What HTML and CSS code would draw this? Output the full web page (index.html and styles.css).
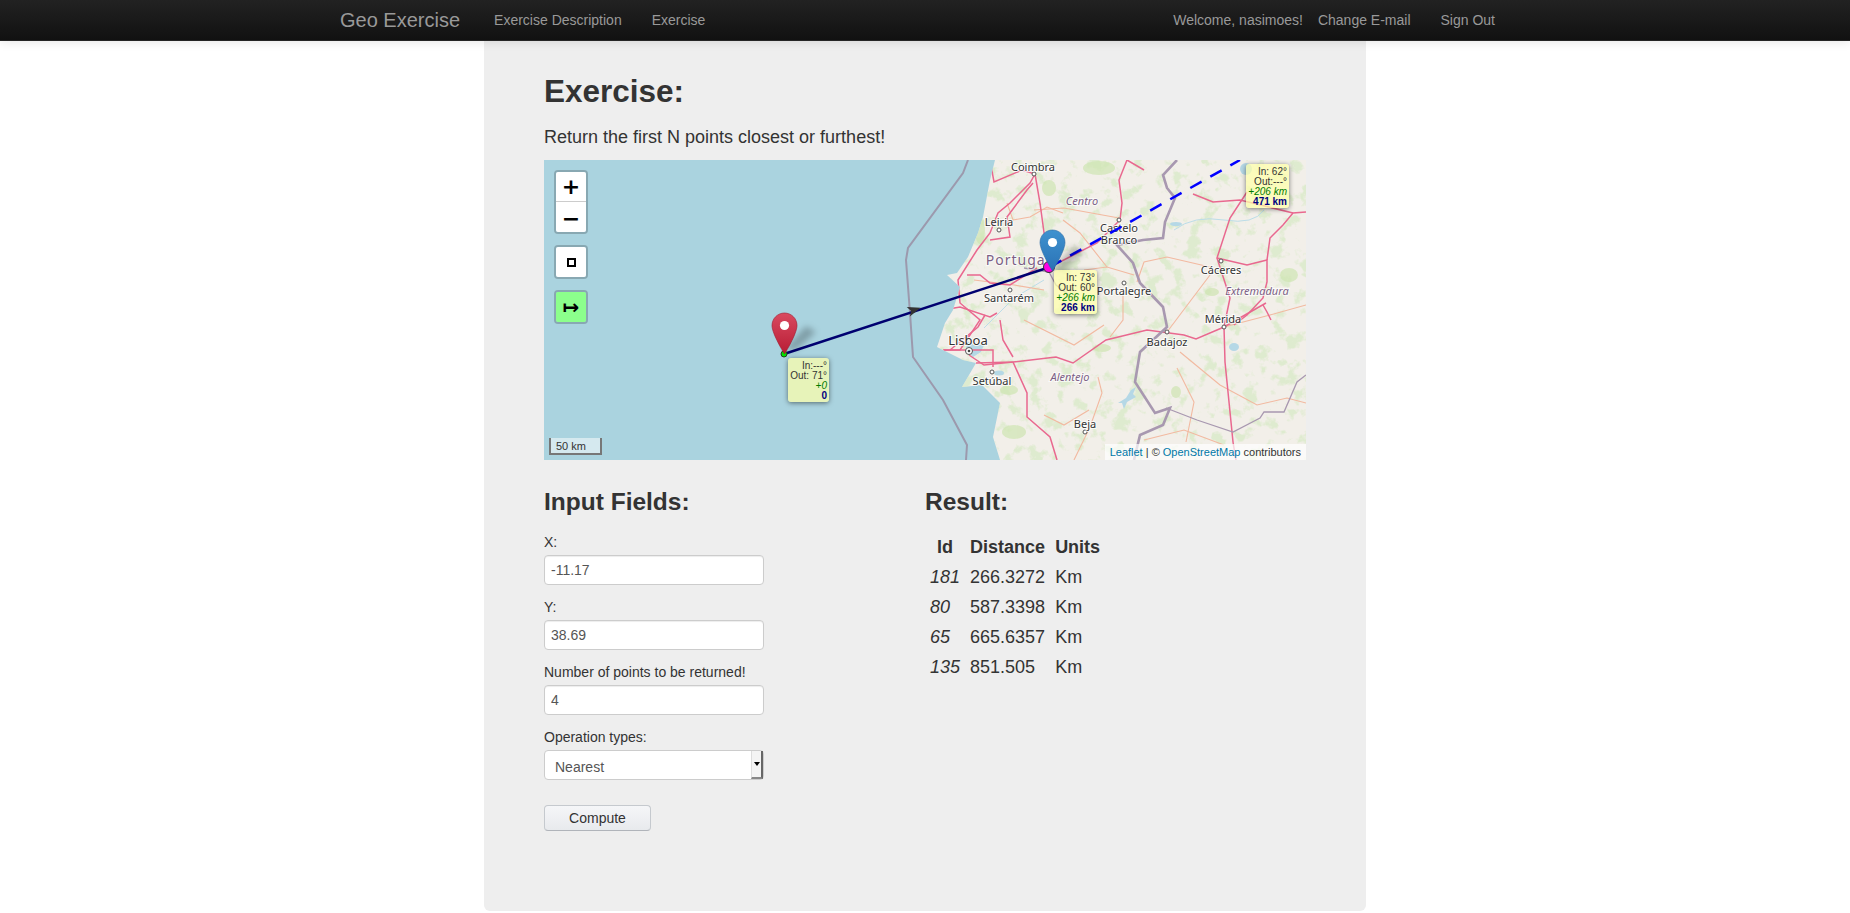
FILE: index.html
```html
<!DOCTYPE html>
<html lang="en">
<head>
<meta charset="utf-8">
<title>Geo Exercise</title>
<link rel="stylesheet" href="styles.css">
</head>
<body>
<header class="navbar">
  <div class="nav-inner">
    <a class="brand" href="#">Geo Exercise</a>
    <nav class="nav-left">
      <a href="#">Exercise Description</a>
      <a href="#">Exercise</a>
    </nav>
    <div class="nav-right">
      <span class="welcome">Welcome, nasimoes!</span>
      <a href="#">Change E-mail</a>
      <a href="#">Sign Out</a>
    </div>
  </div>
</header>
<main class="hero">
  <h1>Exercise:</h1>
  <p class="lead">Return the first N points closest or furthest!</p>
  <div class="map">
    <svg class="map-art" viewBox="0 0 762 300" width="762" height="300" xmlns="http://www.w3.org/2000/svg">
      <defs>
        <clipPath id="landClip">
          <path d="M451 0L446 20L439 57L434 73L424 97L413 113L403 115L416 127L409 150L401 163L393 187L419 200L432 203L418 227L438 225L456 243L449 277L456 300H762V0Z"/>
        </clipPath>
        <filter id="veg" x="0" y="0" width="100%" height="100%" color-interpolation-filters="sRGB">
          <feTurbulence type="fractalNoise" baseFrequency="0.07" numOctaves="4" seed="7"/>
          <feColorMatrix type="matrix" values="0 0 0 0 0.82  0 0 0 0 0.91  0 0 0 0 0.74  7 0 0 0 -3.75"/>
          <feComponentTransfer><feFuncA type="linear" slope="0.6"/></feComponentTransfer>
        </filter>
        <filter id="blur2" x="-50%" y="-50%" width="200%" height="200%"><feGaussianBlur stdDeviation="3"/></filter>
        <linearGradient id="redPin" x1="0" y1="0" x2="0" y2="1">
          <stop offset="0" stop-color="#d94a60"/><stop offset="1" stop-color="#b81c34"/>
        </linearGradient>
        <linearGradient id="bluePin" x1="0" y1="0" x2="0" y2="1">
          <stop offset="0" stop-color="#3f92cf"/><stop offset="1" stop-color="#2a72b5"/>
        </linearGradient>
        <path id="pin" d="M12.5 0C5.6 0 0 5.6 0 12.5 0 21 12.5 41 12.5 41S25 21 25 12.5C25 5.6 19.4 0 12.5 0z"/>
      </defs>

      <rect class="sea" width="762" height="300"/>
      <g clip-path="url(#landClip)">
        <rect class="land" width="762" height="300"/>
        <rect width="762" height="300" filter="url(#veg)"/>
        <g class="green">
          <ellipse cx="555" cy="8" rx="16" ry="7"/><ellipse cx="505" cy="28" rx="7" ry="8"/>
          <ellipse cx="470" cy="272" rx="12" ry="7"/><ellipse cx="465" cy="230" rx="9" ry="5"/>
          <ellipse cx="558" cy="188" rx="9" ry="4"/><ellipse cx="668" cy="132" rx="7" ry="4"/>
          <ellipse cx="632" cy="232" rx="5" ry="6"/><ellipse cx="745" cy="115" rx="9" ry="7"/>
          <ellipse cx="436" cy="70" rx="5" ry="14"/>
        </g>
        <g class="water">
          <path d="M423 181l9 5 9-3-4 9-8 5-7-7z"/>
          <path d="M574 243l8-5 5-8 5-3-3 7 3 3-9 5-3 7-2-6z"/>
          <ellipse cx="690" cy="187" rx="5" ry="4"/><ellipse cx="455" cy="213" rx="5" ry="2.5"/>
          <ellipse cx="702" cy="9" rx="6" ry="6"/><ellipse cx="632" cy="64" rx="6" ry="2"/>
        </g>
        <g class="river">
          <path d="M630 70Q650 55 680 60T720 50"/><path d="M440 168L470 138L500 120"/>
        </g>
        <g class="road-minor">
          <path d="M519 60L536 73L563 107"/><path d="M490 50L520 48L575 58"/>
          <path d="M463 43L469 60L486 57L503 47L519 53"/>
          <path d="M579 133V160L566 177"/><path d="M554 217L558 233L546 267L530 300"/>
          <path d="M593 122L600 102L623 97L666 107"/><path d="M623 172L666 115"/>
          <path d="M636 192L676 225L713 245L743 238L762 243"/><path d="M680 167L726 155L762 145"/>
          <path d="M633 208L650 242L642 282"/><path d="M480 160L530 185L560 165"/>
          <path d="M430 120L470 125L500 130"/><path d="M500 255L520 265L545 250"/>
          <path d="M600 280L640 270L680 285"/><path d="M540 110L563 107L590 115"/>
        </g>
        <g class="road-major">
          <path d="M400 190H416L436 160L416 143L414 120L433 90L446 73L454 53L466 43L486 23L491 14"/>
          <path d="M491 14L496 43L501 80L506 107"/>
          <path d="M489 23L483 30L463 57L466 77L446 80"/>
          <path d="M423 115H436L446 123L466 125L493 108"/>
          <path d="M399 150L416 147L446 157L453 153"/>
          <path d="M456 160L459 180L469 197"/>
          <path d="M399 190H449V207"/>
          <path d="M441 155L434 167L406 190"/>
          <path d="M425 195L440 205L469 202"/>
          <path d="M506 107L553 83L576 60L578 43L575 20L583 0"/>
          <path d="M432 203L469 202L512 197L529 203L562 180L603 170L640 175L652 179L680 167L722 143"/>
          <path d="M469 202L483 233L483 257L506 277L513 300"/>
          <path d="M680 167L681 202L689 282L692 300"/>
          <path d="M680 167L686 138L673 98L686 58L703 32"/>
          <path d="M673 98L703 105L723 100L723 122L719 138L703 155L690 165"/>
          <path d="M723 100L726 78L739 65L749 53L762 52"/>
          <path d="M649 34L669 42L696 40L749 53"/>
          <path d="M719 145L723 152L727 160"/>
          <path d="M446 0L450 22L478 10L491 14"/>
          <path d="M583 0L600 10"/>
        </g>
        <g class="border">
          <path d="M633 0L619 15L623 28L631 38L621 62L619 78L599 80L573 85L589 103L596 123L619 147L623 167L596 192L591 222L611 253L626 248L619 265L596 275L590 300"/>
          <path d="M622 248L653 260L689 272L716 258L720 252L740 252L753 222L762 215" class="border-thin"/>
          <path d="M480 108L505 112L512 125L525 135" class="border-thin"/>
        </g>
      </g>

      <path class="maritime" d="M424 0L419 13L364 88L362 100L366 153L369 197L399 240L423 285L422 300"/>

      <g class="dots">
        <circle cx="490" cy="14" r="2"/><circle cx="455" cy="70" r="2"/><circle cx="575" cy="60" r="2"/>
        <circle cx="580" cy="123" r="2"/><circle cx="466" cy="130" r="2"/><circle cx="448" cy="212" r="2"/>
        <circle cx="541" cy="272" r="2"/><circle cx="677" cy="101" r="2"/><circle cx="680" cy="167" r="2"/>
        <circle cx="623" cy="172" r="2"/><circle cx="425" cy="191" r="3.5"/>
      </g>
      <circle class="bull" cx="425" cy="191" r="1.3"/>

      <g class="place">
        <text x="489" y="11">Coimbra</text>
        <text x="455" y="66">Leiria</text>
        <text x="575" y="72">Castelo</text>
        <text x="575" y="84">Branco</text>
        <text x="580" y="135">Portalegre</text>
        <text x="465" y="142">Santarém</text>
        <text x="448" y="225">Setúbal</text>
        <text x="541" y="268">Beja</text>
        <text x="677" y="114">Cáceres</text>
        <text x="679" y="163">Mérida</text>
        <text x="623" y="186">Badajoz</text>
        <text class="big" x="424" y="185">Lisboa</text>
      </g>
      <g class="region">
        <text x="538" y="45">Centro</text>
        <text x="526" y="221">Alentejo</text>
        <text x="713" y="135">Extremadura</text>
        <text class="country" x="474" y="105">Portugal</text>
      </g>

      <line class="dash" x1="506" y1="107" x2="696" y2="0"/>
      <line class="solid" x1="240" y1="194" x2="506" y2="107"/>
      <path class="arrow" transform="translate(370 150) rotate(-18)" d="M7 0L-6 -5L-3 0L-6 5Z"/>

      <path class="pin-shadow" filter="url(#blur2)" d="M240 190L262 166L272 172L252 190Z"/>
      <path class="pin-shadow" filter="url(#blur2)" d="M508 110L530 86L540 92L520 110Z"/>

      <circle class="node-start" cx="240" cy="194" r="3"/>
      <circle class="node-mid" cx="505" cy="107" r="5.5"/>

      <g transform="translate(228 153)">
        <use href="#pin" class="pin-red"/><circle cx="12.5" cy="12.5" r="4.6" class="pin-eye"/>
      </g>
      <g transform="translate(496 70)">
        <use href="#pin" class="pin-blue"/><circle cx="12.5" cy="12.5" r="4.6" class="pin-eye"/>
      </g>
    </svg>

    <div class="controls">
      <div class="ctrl-bar">
        <a class="ctrl zoom-in" href="#">+</a>
        <a class="ctrl zoom-out" href="#">−</a>
      </div>
      <div class="ctrl-bar"><a class="ctrl" href="#"><span class="square-glyph"></span></a></div>
      <div class="ctrl-bar"><a class="ctrl ctrl-on" href="#">↦</a></div>
    </div>

    <div class="tip tip-a"><div>In:---°</div><div>Out: 71°</div><div class="gain">+0</div><div class="total">0</div></div>
    <div class="tip tip-b"><div>In: 73°</div><div>Out: 60°</div><div class="gain">+266 km</div><div class="total">266 km</div></div>
    <div class="tip tip-c"><div>In: 62°</div><div>Out:---°</div><div class="gain">+206 km</div><div class="total">471 km</div></div>

    <div class="scale">50 km</div>
    <div class="attribution"><a href="#">Leaflet</a> | © <a href="#">OpenStreetMap</a> contributors</div>
  </div>

  <div class="columns">
    <section class="inputs">
      <h3>Input Fields:</h3>
      <label for="fx">X:</label>
      <input id="fx" type="text" value="-11.17">
      <label for="fy">Y:</label>
      <input id="fy" type="text" value="38.69">
      <label for="fn">Number of points to be returned!</label>
      <input id="fn" type="text" value="4">
      <label for="fo">Operation types:</label>
      <div class="select-wrap">
        <select id="fo"><option>Nearest</option><option>Furthest</option></select>
        <span class="spin"><span class="spin-arrow"></span></span>
      </div>
      <button class="compute" type="button">Compute</button>
    </section>
    <section class="results">
      <h3>Result:</h3>
      <table>
        <thead><tr><th class="id-head">Id</th><th>Distance</th><th>Units</th></tr></thead>
        <tbody>
          <tr><td class="id">181</td><td>266.3272</td><td>Km</td></tr>
          <tr><td class="id">80</td><td>587.3398</td><td>Km</td></tr>
          <tr><td class="id">65</td><td>665.6357</td><td>Km</td></tr>
          <tr><td class="id">135</td><td>851.505</td><td>Km</td></tr>
        </tbody>
      </table>
    </section>
  </div>
</main>
</body>
</html>
```
FILE: styles.css
```css
* { box-sizing: border-box; }
html, body { margin: 0; padding: 0; }
body {
  background: #fff;
  color: #333;
  font: 14px/20px "Liberation Sans", Arial, sans-serif;
  min-height: 913px;
}
a { text-decoration: none; }

.navbar {
  position: relative;
  z-index: 5;
  height: 41px;
  background: linear-gradient(#222, #111);
  border-bottom: 1px solid #252525;
  box-shadow: 0 1px 10px rgba(0, 0, 0, .1);
}
.nav-inner {
  width: 1170px;
  margin: 0 auto;
  height: 40px;
  display: flex;
  align-items: center;
  padding-right: 15px;
}
.nav-inner a, .welcome { color: #999; }
.brand { font-size: 20px; margin-right: 34px; }
.nav-left { display: flex; gap: 30px; }
.nav-right { margin-left: auto; display: flex; }
.welcome { margin-right: 15px; }
.nav-right a:last-child { margin-left: 30px; }

.hero {
  width: 882px;
  height: 870px;
  margin: 0 auto;
  padding: 30px 60px 0;
  background: #eee;
  border-radius: 0 0 6px 6px;
}
h1 {
  margin: 0;
  font-size: 31.5px;
  line-height: 40px;
}
.lead {
  margin: 11px 0 8px;
  font-size: 18px;
  line-height: 30px;
}

.map { position: relative; width: 762px; height: 300px; overflow: hidden; }
.map-art { display: block; }
.sea { fill: #aad3df; }
.land { fill: #f2efe9; }
.green { fill: #cfe5b2; opacity: .7; }
.water { fill: #b5d8e6; }
.river path { fill: none; stroke: #bcdde8; stroke-width: 1; }
.road-major path { fill: none; stroke: #e9688f; stroke-width: 1.5; }
.road-minor path { fill: none; stroke: #f2b9a0; stroke-width: 1.1; }
.border path { fill: none; stroke: #a898b0; stroke-width: 2.6; }
.border .border-thin { stroke-width: 1.3; }
.maritime { fill: none; stroke: #9c99ad; stroke-width: 2; }
.dots circle { fill: #fff; stroke: #555; stroke-width: 1; }
.bull { fill: #444; }
.place text {
  font: 11px "Noto Sans", sans-serif;
  fill: #333;
  text-anchor: middle;
  stroke: rgba(255, 255, 255, .8);
  stroke-width: 2px;
  paint-order: stroke;
}
.place .big { font-size: 13px; }
.region text {
  font: italic 11px "Noto Sans", sans-serif;
  fill: #7c5f85;
  text-anchor: middle;
  stroke: rgba(255, 255, 255, .7);
  stroke-width: 2px;
  paint-order: stroke;
}
.region .country { font: 14px "Noto Sans", sans-serif; letter-spacing: 1px; }
.solid { stroke: #000070; stroke-width: 2.5; }
.dash { stroke: #0000ff; stroke-width: 2.5; stroke-dasharray: 13 10; }
.arrow { fill: #333; }
.pin-shadow { fill: rgba(0, 0, 0, .25); }
.node-start { fill: #00e000; stroke: #224422; stroke-width: 1; }
.node-mid { fill: #ff00e6; stroke: #333; stroke-width: 1; }
.pin-red { fill: url(#redPin); stroke: #a01a2e; stroke-width: .6; }
.pin-blue { fill: url(#bluePin); stroke: #2a6aa5; stroke-width: .6; }
.pin-eye { fill: #fff; }

.controls {
  position: absolute;
  left: 10px;
  top: 10px;
  display: flex;
  flex-direction: column;
  align-items: flex-start;
  gap: 11px;
}
.ctrl-bar {
  width: 34px;
  border: 2px solid rgba(0, 0, 0, .2);
  border-radius: 4px;
  background-clip: padding-box;
}
.ctrl {
  display: flex;
  align-items: center;
  justify-content: center;
  width: 30px;
  height: 30px;
  background: #fff;
  color: #000;
  font: bold 22px/30px "DejaVu Sans", sans-serif;
  border-radius: 2px;
}
.zoom-in { border-bottom: 1px solid #ccc; border-radius: 2px 2px 0 0; padding-top: 1px; }
.zoom-out { border-radius: 0 0 2px 2px; padding-top: 3px; }
.ctrl-on { background: #8cff8c; font-size: 20px; }
.square-glyph { width: 9px; height: 9px; border: 2px solid #000; }

.tip {
  position: absolute;
  width: 43px;
  height: 44px;
  padding: 3px 2px 0 0;
  background: rgba(255, 255, 170, .72);
  border-radius: 3px;
  box-shadow: 0 1px 5px rgba(0, 0, 0, .5);
  color: #333;
  font: 10px/10px "Liberation Sans", Arial, sans-serif;
  text-align: right;
  white-space: nowrap;
}
.tip-a { left: 244px; top: 198px; width: 41px; }
.tip-b { left: 510px; top: 110px; }
.tip-c { left: 702px; top: 4px; }
.gain { color: #007a00; font-style: italic; }
.total { color: #000080; font-weight: bold; }

.scale {
  position: absolute;
  left: 5px;
  bottom: 5px;
  width: 53px;
  height: 17px;
  padding: 2px 5px 1px;
  border: 2px solid #777;
  border-top: 0;
  background: rgba(255, 255, 255, .5);
  color: #333;
  font: 11px/13px "Liberation Sans", Arial, sans-serif;
}
.attribution {
  position: absolute;
  right: 0;
  bottom: 0;
  height: 16px;
  padding: 0 5px;
  background: rgba(255, 255, 255, .7);
  color: #333;
  font: 11px/16px "Liberation Sans", Arial, sans-serif;
}
.attribution a { color: #0078a8; }

.columns { display: grid; grid-template-columns: 381px 1fr; margin-top: 22px; }
h3 { margin: 0 0 10px; font-size: 24.5px; line-height: 40px; }
label { display: block; margin-bottom: 3px; }
input {
  display: block;
  width: 220px;
  height: 30px;
  margin: 0 0 12px;
  padding: 4px 6px;
  border: 1px solid #ccc;
  border-radius: 4px;
  background: #fff;
  color: #555;
  font: 14px/20px "Liberation Sans", Arial, sans-serif;
  box-shadow: inset 0 1px 1px rgba(0, 0, 0, .075);
  outline: 0;
}
.select-wrap { position: relative; width: 220px; height: 30px; }
select {
  display: block;
  width: 220px;
  height: 30px;
  padding: 6px 6px 2px 10px;
  border: 1px solid #ccc;
  border-radius: 4px;
  background: #fff;
  color: #555;
  font: 14px/20px "Liberation Sans", Arial, sans-serif;
  appearance: none;
  -webkit-appearance: none;
  outline: 0;
}
.spin {
  position: absolute;
  right: 1px;
  top: 1px;
  bottom: 1px;
  width: 12px;
  display: flex;
  align-items: center;
  justify-content: center;
  background: #f4f4f4;
  border-left: 1px solid #ddd;
  border-right: 2px solid #666;
  border-bottom: 2px solid #888;
  pointer-events: none;
}
.spin-arrow {
  width: 0;
  height: 0;
  border: 3px solid transparent;
  border-top: 4px solid #000;
  border-bottom: 0;
}
.compute {
  display: block;
  width: 107px;
  height: 26px;
  margin-top: 25px;
  padding: 0;
  border: 1px solid #bbb;
  border-color: #c5c9ce #c5c9ce #b0b4ba;
  border-radius: 4px;
  background: linear-gradient(#f5f6f8, #e8eaed);
  color: #333;
  font: 14px/20px "Liberation Sans", Arial, sans-serif;
}

table { border-collapse: collapse; margin: 2px 0 0 1px; font-size: 18px; line-height: 30px; }
th, td { padding: 0 6px 0 4px; text-align: left; font-weight: normal; }
th { font-weight: bold; }
.id-head { text-align: center; }
.id { font-style: italic; }
```
